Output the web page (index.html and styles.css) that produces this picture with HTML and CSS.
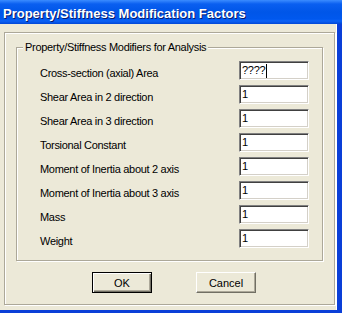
FILE: index.html
```html
<!DOCTYPE html>
<html lang="en">
<head>
  <meta charset="UTF-8" />
  <title>Property/Stiffness Modification Factors</title>
  <link rel="stylesheet" href="styles.css">
</head>
<body>
  <div class="window">
    <div class="titlebar">Property/Stiffness Modification Factors</div>
    <div class="client">
      <div class="frame">
        <div class="group">
          <div class="group-title">Property/Stiffness Modifiers for Analysis</div>
          <div class="rows">
            <div class="row">
              <span class="label">Cross-section (axial) Area</span>
              <div class="edit">????<span class="caret"></span></div>
            </div>
            <div class="row">
              <span class="label">Shear Area in 2 direction</span>
              <div class="edit">1</div>
            </div>
            <div class="row">
              <span class="label">Shear Area in 3 direction</span>
              <div class="edit">1</div>
            </div>
            <div class="row">
              <span class="label">Torsional Constant</span>
              <div class="edit">1</div>
            </div>
            <div class="row">
              <span class="label">Moment of Inertia about 2 axis</span>
              <div class="edit">1</div>
            </div>
            <div class="row">
              <span class="label">Moment of Inertia about 3 axis</span>
              <div class="edit">1</div>
            </div>
            <div class="row">
              <span class="label">Mass</span>
              <div class="edit">1</div>
            </div>
            <div class="row">
              <span class="label">Weight</span>
              <div class="edit">1</div>
            </div>
          </div>
        </div>
        <div class="buttons">
          <button class="btn default">OK</button>
          <button class="btn">Cancel</button>
        </div>
      </div>
    </div>
  </div>
</body>
</html>
```
FILE: styles.css
```css
* {
  box-sizing: border-box;
}
body {
  margin: 0;
  width: 342px;
  height: 313px;
  overflow: hidden;
  font-family: "Liberation Sans", Arial, sans-serif;
  font-size: 11px;
  letter-spacing: -0.3px;
  color: #000;
}
.window {
  width: 342px;
  height: 313px;
  display: flex;
  flex-direction: column;
  background: #0a3fd8;
}
.titlebar {
  height: 24px;
  flex: none;
  padding: 3px 0 0 3px;
  line-height: 21px;
  font-size: 13px;
  font-weight: bold;
  letter-spacing: 0;
  color: #fff;
  text-shadow: 1px 1px #0a1a6a;
  background: linear-gradient(to bottom, #3b8cff 0, #0a5ff0 4px, #0056e8 12px, #0058ee 19px, #0b62f6 21px, #0046d6 24px);
}
.client {
  width: 337px;
  height: 286px;
  background: #ece9d8;
  padding: 8px 0 0 4px;
  border-right: 1px solid #fff;
}
.frame {
  width: 331px;
  height: 273px;
  border: 1px solid #aca899;
  box-shadow: inset 1px 1px #fff, 1px 1px #fff;
  padding: 14px 0 0 11px;
}
.group {
  width: 307px;
  height: 214px;
  border: 1px solid #aca899;
  box-shadow: inset 1px 1px #fff, 1px 1px #fff;
}
.group-title {
  width: max-content;
  height: 13px;
  line-height: 13px;
  margin: -7px 0 0 6px;
  padding: 0 2px;
  background: #ece9d8;
}
.rows {
  margin-top: 7px;
  padding: 0 13px 0 23px;
  display: flex;
  flex-direction: column;
  gap: 5px;
}
.row {
  display: flex;
  height: 19px;
}
.label {
  flex: 1;
  line-height: 19px;
  padding-top: 3px;
  white-space: nowrap;
}
.edit {
  width: 70px;
  height: 19px;
  background: #fff;
  border-style: solid;
  border-width: 1px;
  border-color: #808080 #fff #fff #808080;
  box-shadow: inset 1px 1px #404040, inset -1px -1px #d4d0c8;
  padding: 0 2px;
  line-height: 15px;
  display: flex;
  align-items: center;
}
.caret {
  display: inline-block;
  width: 1px;
  height: 14px;
  margin-left: 1px;
  background: #000;
}
.buttons {
  display: flex;
  gap: 44px;
  margin: 11px 0 0 76px;
}
.btn {
  width: 60px;
  height: 21px;
  padding: 0;
  font: inherit;
  letter-spacing: 0;
  color: #000;
  background: #ece9d8;
  border-style: solid;
  border-width: 1px;
  border-color: #fff #716f64 #716f64 #fff;
  box-shadow: inset -1px -1px #aca899;
}
.btn.default {
  border-color: #000;
  box-shadow: inset 1px 1px #fff, inset -1px -1px #716f64, inset -2px -2px #aca899;
}
```
